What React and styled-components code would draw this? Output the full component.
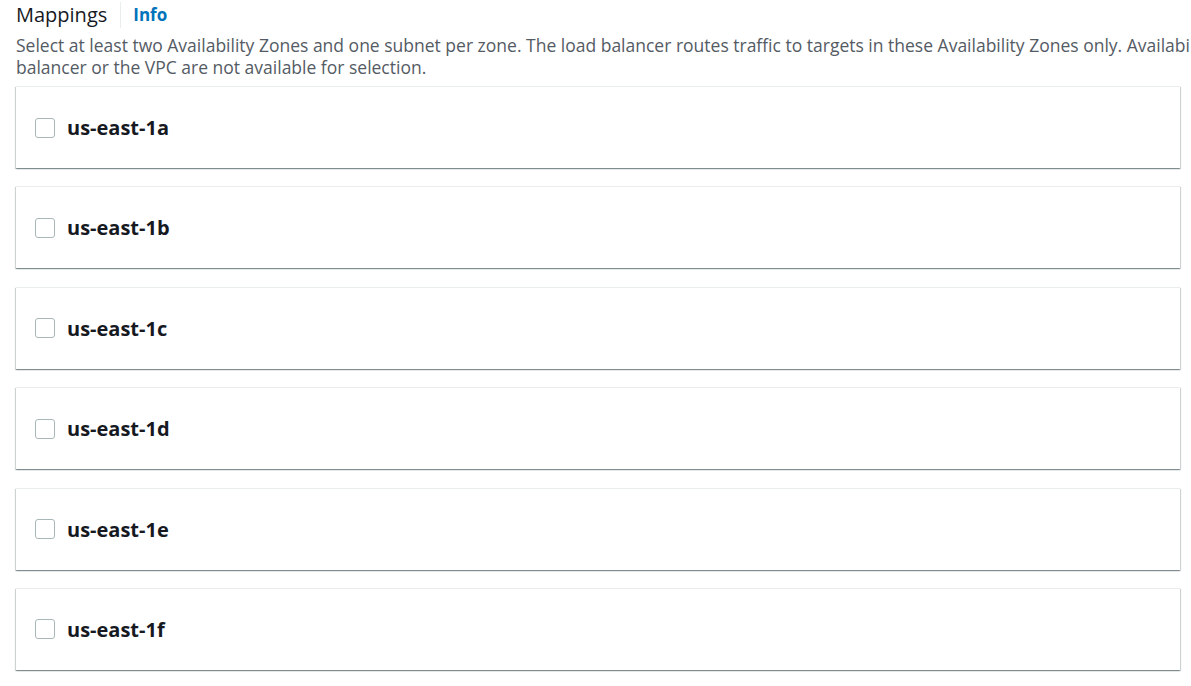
import React from 'react';
import styled, { createGlobalStyle } from 'styled-components';

const GlobalStyle = createGlobalStyle`
  html, body {
    margin: 0;
    padding: 0;
    background: #ffffff;
    overflow: hidden;
  }
  body {
    font-family: 'Open Sans', 'Noto Sans', sans-serif;
    color: #16191f;
  }
`;

const Page = styled.div`
  width: 1191px;
  height: 686px;
  overflow: hidden;
  padding: 0 11px 0 16px;
  box-sizing: border-box;
`;

const Header = styled.div`
  display: flex;
  align-items: center;
  height: 30px;
`;

const Title = styled.h2`
  margin: 0;
  font-size: 20px;
  font-weight: 400;
  color: #16191f;
  padding-right: 13px;
  border-right: 1px solid #eaeded;
  line-height: 26px;
`;

const InfoLink = styled.a`
  margin-left: 12px;
  font-size: 17px;
  font-weight: 700;
  color: #0073bb;
  text-decoration: none;
  line-height: 24px;
`;

const Description = styled.p`
  margin: 4px 0 8px 0;
  font-size: 17.5px;
  line-height: 22px;
  color: #545b64;
  white-space: nowrap;
`;

const List = styled.div`
  display: flex;
  flex-direction: column;
  gap: 18.4px;
`;

const Card = styled.div`
  height: 82px;
  box-sizing: border-box;
  background: #fff;
  border-top: 1px solid #eaeded;
  box-shadow: 0 1px 1px 0 rgba(0, 28, 36, 0.3), 1px 1px 1px 0 rgba(0, 28, 36, 0.15),
    -1px 1px 1px 0 rgba(0, 28, 36, 0.15);
  display: flex;
  align-items: center;
  padding: 0 19px;
  gap: 12px;
`;

const Box = styled.span`
  width: 20px;
  height: 20px;
  box-sizing: border-box;
  border: 1px solid #aab7b8;
  border-radius: 3px;
  background: #fff;
  flex: none;
`;

const Label = styled.label`
  font-size: 20px;
  font-weight: 700;
  color: #16191f;
`;

const zones = ['us-east-1a', 'us-east-1b', 'us-east-1c', 'us-east-1d', 'us-east-1e', 'us-east-1f'];

export default function App() {
  return (
    <Page>
      <GlobalStyle />
      <Header>
        <Title>Mappings</Title>
        <InfoLink href="#">Info</InfoLink>
      </Header>
      <Description>
        Select at least two Availability Zones and one subnet per zone. The load balancer routes traffic to targets in these Availability Zones only. Availability Zones that are not supported by the load
        <br />
        balancer or the VPC are not available for selection.
      </Description>
      <List>
        {zones.map((z) => (
          <Card key={z}>
            <Box />
            <Label>{z}</Label>
          </Card>
        ))}
      </List>
    </Page>
  );
}
